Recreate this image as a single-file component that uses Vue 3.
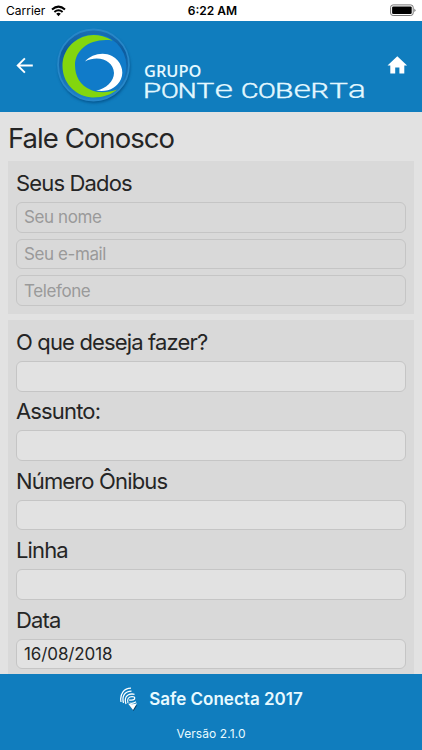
<script setup>
const contactFields = ['Seu nome', 'Seu e-mail', 'Telefone']
const requestFields = [
  { label: 'O que deseja fazer?', value: '' },
  { label: 'Assunto:', value: '' },
  { label: 'Número Ônibus', value: '' },
  { label: 'Linha', value: '' },
  { label: 'Data', value: '16/08/2018' },
]
// Left bearing and drawn width of each glyph, in em
const ink = {
  P: [.083, .51], O: [.057, .573], N: [.083, .547], T: [.02, .555], C: [.057, .557],
  B: [.083, .5], R: [.083, .52], e: [.045, .445], a: [.05, .44],
}
const wordmark = [
  ['P', 145.5, 15], ['O', 162.5, 15], ['N', 180, 14.5], ['T', 197, 16.5], ['e', 216, 16],
  ['C', 242.5, 15], ['O', 259.5, 15], ['B', 277.5, 15], ['e', 295, 15],
  ['R', 313, 15], ['T', 330, 17], ['a', 349.5, 15],
].map(([c, x, w]) => {
  const lower = c === 'e' || c === 'a'
  const size = lower ? 25.6 : 20
  const scale = w / (ink[c][1] * size)
  return { c, lower, transform: `translate(${x - ink[c][0] * size * scale} 98.3) scale(${scale} 1)` }
})
</script>

<template>
  <div class="screen">
    <div class="status">
      <span class="carrier">Carrier</span>
      <svg class="wifi" width="15" height="12" viewBox="0 0 15 12">
        <path d="M1 4.5Q7.5-1.2 14 4.5M3.4 7Q7.5 3.5 11.6 7" fill="none" stroke="#000" stroke-width="2" />
        <path d="M5.2 8.8Q7.5 6.8 9.8 8.8L7.5 11.2Z" />
      </svg>
      <span class="time">6:22 AM</span>
      <svg class="battery" width="27" height="13" viewBox="0 0 27 13">
        <rect x="1.6" y=".9" width="22.6" height="10.6" rx="2.5" fill="none" stroke="#777" />
        <rect x="3.1" y="2.4" width="19.6" height="7.6" rx="1.2" />
        <path d="M25.3 4.4Q27.6 6.2 25.3 8Z" fill="#777" />
      </svg>
    </div>
    <header class="header">
      <svg width="422" height="91" viewBox="0 21 422 91">
        <defs>
          <filter id="shadow" x="-20%" y="-20%" width="140%" height="140%"><feGaussianBlur stdDeviation="1.6" /></filter>
          <linearGradient id="rim" x1="0" y1="0" x2="0" y2="1">
            <stop offset="0" stop-color="#1a6fb4" /><stop offset=".3" stop-color="#0d5c9f" /><stop offset="1" stop-color="#1f83c9" />
          </linearGradient>
        </defs>
        <path d="M32.8 65.5H17.7M24.9 58.3L17.7 65.5L24.9 72.7" fill="none" stroke="#fff" stroke-width="1.9" />
        <circle cx="94.2" cy="67" r="36" fill="#064a80" opacity=".8" filter="url(#shadow)" />
        <circle cx="93.5" cy="65" r="35.5" fill="url(#rim)" stroke="#2787c8" stroke-width="1.8" />
        <circle cx="94.5" cy="66" r="31.8" fill="#107bc9" />
        <path d="M112.5 40.5C104 35.5 95 34 88 35.5C73 38.5 62.5 51 62.5 66C62.5 82 74 95 90 97.3C101 98.3 111 95 117 89.5C108 93 98 93 91 90C80 85.5 75 76 75 65C75 50 90 37.5 112.5 40.5Z" fill="#83d60e" />
        <path d="M85 61.5C91 54.5 103 51.5 112 56C121 61 124.5 71 121 79C117 88 108 92.5 96 90.5C106 89 114 81 114 73C113.5 61 99 54.5 85 61.5Z" fill="#fff" />
        <text class="grupo" x="144" y="76.5" textLength="57.5" lengthAdjust="spacingAndGlyphs">GRUPO</text>
        <text v-for="(l, i) in wordmark" :key="i" class="word" :class="{ lower: l.lower }" :transform="l.transform">{{ l.c }}</text>
        <path d="M397.3 56.3L387.5 65.5H390.3V73.5H395.2V67.6H399.4V73.5H404.3V65.5H407.1Z" fill="#fff" />
      </svg>
    </header>
    <main class="content">
      <h1>Fale Conosco</h1>
      <section class="card first">
        <h2>Seus Dados</h2>
        <div class="inputs">
          <input v-for="f in contactFields" :key="f" class="field plain" :placeholder="f">
        </div>
      </section>
      <section class="card second">
        <div v-for="f in requestFields" :key="f.label" class="group">
          <h2>{{ f.label }}</h2>
          <input class="field" :value="f.value">
        </div>
      </section>
    </main>
    <footer class="footer">
      <div class="brand">
        <svg width="18" height="24" viewBox="0 0 18 24">
          <path d="M9.3 18Q13.3 20 17.3 18L13.6 24Z" fill="#0b4268" />
          <g fill="none" stroke="#fff" stroke-width="1.25">
            <path d="M1 15C-.5 7 4 1.2 11 1.2" /><path d="M3.5 16C1.5 9 5 4 11.5 4" />
            <path d="M6 17C4 11 6.5 7 12 6.8L14.5 7.3" /><path d="M8 16C6.5 12 9 9.5 12 9.5Q15.5 9.5 14.5 12Q13 13.8 9 13" /><path d="M9.5 16Q13 17 16 14.8" />
          </g>
          <path d="M8 16.5Q12.5 18.2 17 16.2L13 23Z" fill="#fff" />
        </svg>
        <strong>Safe Conecta 2017</strong>
      </div>
      <small>Versão 2.1.0</small>
    </footer>
  </div>
</template>

<style>
body { margin: 0; }
</style>
<style scoped>
* { box-sizing: border-box; }
.screen { width: 422px; height: 750px; display: flex; flex-direction: column; overflow: hidden; background: #e2e2e2; font-family: Inter, "Liberation Sans", sans-serif; color: #252525; }
.status { height: 21px; flex: none; display: grid; grid-template-columns: 45px 1fr auto 1fr 45px; align-items: center; background: #fff; color: #000; font-size: 12px; line-height: 21px; }
.carrier { padding-left: 6px; }
.wifi { margin-left: 6px; }
.time { font-weight: 600; padding-left: 3px; }
.battery { grid-column: 5; margin-left: 12px; }
.header { height: 91px; flex: none; background: #107dbe; }
.header svg { display: block; }
.grupo { font: 600 16.5px "Open Sans", sans-serif; fill: #e4f8ff; }
.word { font: 300 20px Roboto, sans-serif; fill: #e4f8ff; stroke: #e4f8ff; stroke-width: .45px; }
.lower { font-size: 25.6px; stroke-width: .2px; }
.content { flex: 1; min-height: 0; overflow: hidden; padding: 0 8px; display: flex; flex-direction: column; }
h1, h2 { margin: 0; font-weight: 400; white-space: nowrap; }
h1 { height: 49px; flex: none; font-size: 27.5px; line-height: 52px; letter-spacing: -.95px; }
.card { background: #d9d9d9; padding: 0 8px; }
.first { height: 153px; flex: none; margin-bottom: 6px; }
.second { flex: 1; }
.inputs { display: grid; gap: 6px; }
h2 { height: 41px; font-size: 22px; line-height: 44px; letter-spacing: -.85px; }
.group { height: 69.5px; }
.group + .group h2 { height: 39px; line-height: 41px; }
.group:first-child { height: 71px; }
.field { display: block; width: 390px; height: 30.7px; border: 1px solid #c5c5c5; border-radius: 6px; background: #e2e2e2; padding: 0 7px; font: 17px Inter, sans-serif; letter-spacing: -.1px; color: #252525; outline: 0; }
.plain { background: #d9d9d9; letter-spacing: -.4px; }
.field::placeholder { color: #9a9a9a; opacity: 1; }
.footer { height: 76px; flex: none; background: #107dbe; color: #e8faff; display: flex; flex-direction: column; align-items: center; }
.brand { display: flex; align-items: center; gap: 11px; height: 49px; padding-left: 1px; }
.brand strong { font-size: 17px; font-weight: 600; }
small { font-size: 12px; line-height: 22px; letter-spacing: .08px; }
</style>
